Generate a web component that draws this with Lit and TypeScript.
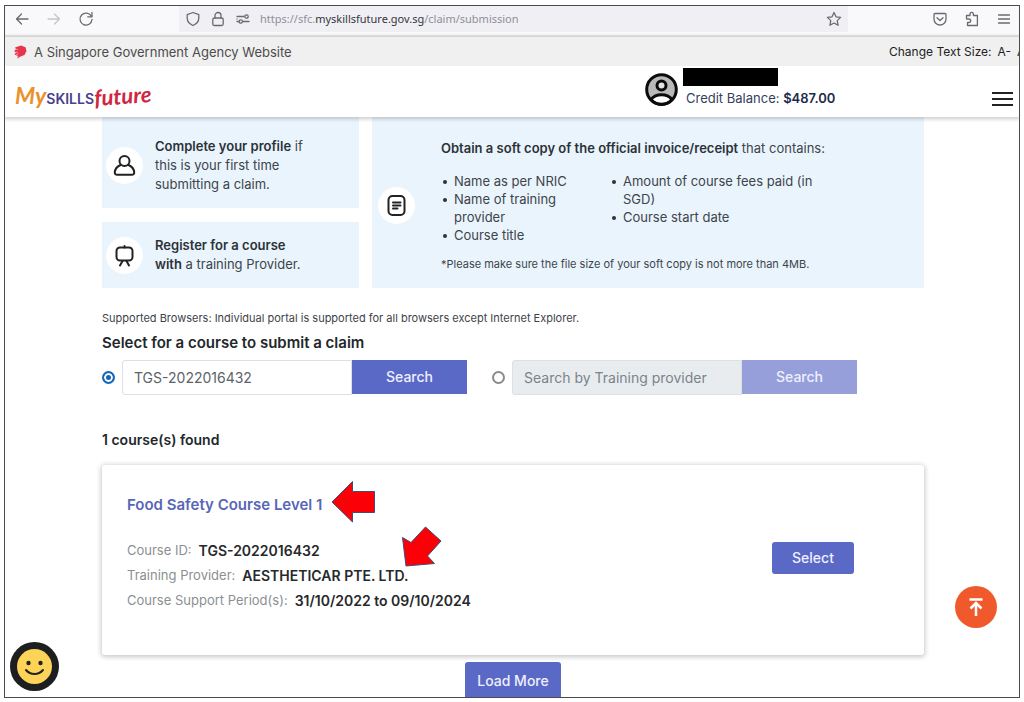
import { LitElement, html, css, svg } from "lit";
import { customElement, property, state } from "lit/decorators.js";

const icons = {
  back: svg`<path d="M14 8H2.500M7.500 3L2.500 8l5 5"/>`,
  forward: svg`<path d="M2 8h11.500M8.500 3l5 5-5 5"/>`,
  reload: svg`<path d="M13.300 5.200A6 6 0 1 0 14 8.500M14 1.500v4.300H9.700"/>`,
  shield: svg`<path d="M8 1.500l5.800 2.200v3.300c0 3.500-2.300 6-5.800 7.500-3.500-1.500-5.800-4-5.800-7.500V3.700z"/>`,
  lock: svg`<rect x="2.800" y="7" width="10.400" height="7.500" rx="1.500"/><path d="M5 7V4.500a3 3 0 0 1 6 0V7"/>`,
  tune: svg`<path d="M2 5.500h7M2 10.500h2M8 10.500h6M2 8h0"/><circle cx="11.500" cy="5.500" r="1.700"/><circle cx="5.800" cy="10.500" r="1.700"/>`,
  star: svg`<path d="M8 1.500l2 4.300 4.600.6-3.400 3.200.9 4.700L8 12l-4.100 2.300.9-4.700L1.400 6.400 6 5.800z"/>`,
  pocket: svg`<path d="M2 3.500c0-.6.400-1 1-1h10c.6 0 1 .4 1 1V8a6 6 0 0 1-12 0zM5 6.800l3 2.700 3-2.700"/>`,
  puzzle: svg`<path d="M6 4.500V3a1.700 1.700 0 0 1 3.400 0v1.500h4v10H3.500v-3H5a1.700 1.700 0 0 0 0-3.500H3.500l-1-.1V4.500z"/>`,
  menu: svg`<path d="M2.500 4h11M2.500 8h11M2.500 12h11"/>`,
};

@customElement("line-icon")
class LineIcon extends LitElement {
  static styles = css`
    :host { display: inline-flex; width: 16px; height: 16px; }
    svg { width: 100%; height: 100%; fill: none; stroke: currentColor; stroke-width: 1.3; stroke-linejoin: round; stroke-linecap: round; }
  `;
  @property() name: keyof typeof icons = "menu";
  render() {
    return html`<svg viewBox="0 0 16 16" aria-hidden="true">${icons[this.name]}</svg>`;
  }
}

@customElement("browser-bar")
class BrowserBar extends LitElement {
  static styles = css`
    :host { display: flex; align-items: center; height: 31px; padding: 0 7px 3px 9px; background: #f9f9fb; border-bottom: 2px solid #e6e6e8; color: #6a6a70; font: 11px/16px "Noto Sans", sans-serif; }
    button { display: flex; border: 0; padding: 0; background: none; color: inherit; }
    button:disabled { color: #c6c6ca; }
    .nav { display: flex; gap: 16px; width: 165px; }
    .address { flex: 1; display: flex; align-items: center; align-self: stretch; gap: 9px; padding: 0 6px; background: #f0f0f4; }
    .url { flex: 1; color: #8f8f96; }
    .url b { font-weight: 400; color: #35353c; }
    .tools { display: flex; gap: 16px; padding-left: 84px; }
  `;
  render() {
    return html`
      <div class="nav">
        <button aria-label="Back"><line-icon name="back"></line-icon></button>
        <button aria-label="Forward" disabled><line-icon name="forward"></line-icon></button>
        <button aria-label="Reload"><line-icon name="reload"></line-icon></button>
      </div>
      <div class="address">
        <line-icon name="shield"></line-icon>
        <line-icon name="lock"></line-icon>
        <line-icon name="tune"></line-icon>
        <span class="url">https://sfc.<b>myskillsfuture.gov.sg</b>/claim/submission</span>
        <button aria-label="Bookmark"><line-icon name="star"></line-icon></button>
      </div>
      <div class="tools">
        <button aria-label="Pocket"><line-icon name="pocket"></line-icon></button>
        <button aria-label="Extensions"><line-icon name="puzzle"></line-icon></button>
        <button aria-label="Application menu"><line-icon name="menu"></line-icon></button>
      </div>
    `;
  }
}

@customElement("site-header")
class SiteHeader extends LitElement {
  static styles = css`
    :host { display: block; position: relative; z-index: 1; background: #fff; box-shadow: 0 1px 4px 1px rgba(0, 0, 0, 0.2); }
    .agency { display: flex; align-items: center; height: 29px; padding-left: 8px; background: #f0f0f0; color: #4c4c4c; font-size: 12px; white-space: nowrap; overflow: hidden; }
    .lion { width: 14px; height: 14px; margin-right: 7px; }
    .agency-name { flex: 1; font-size: 13px; }
    .sizes { display: flex; gap: 6px; width: 130px; color: #222; }
    .sizes button { border: 0; padding: 0; background: none; font: inherit; color: inherit; }
    .brand-row { display: flex; align-items: center; height: 51px; padding: 0 6px 0 10px; }
    .logo { display: flex; align-items: baseline; margin-right: auto; padding-top: 6px; text-decoration: none; font-family: Lato, sans-serif; }
    .my { color: #e9922b; font-size: 23px; font-style: italic; font-weight: 700; }
    .skills { color: #46408f; font-family: Inter, sans-serif; font-size: 14px; font-weight: 600; }
    .future { color: #d0263f; font-size: 22px; font-style: italic; font-weight: 700; transform: rotate(-4deg); }
    .account { display: flex; align-self: flex-start; gap: 5px; width: 347px; padding-top: 2px; }
    .avatar { width: 33px; height: 33px; margin-top: 5px; }
    .details { display: flex; flex-direction: column; gap: 4px; color: #33415c; font-size: 13px; line-height: 16px; }
    .name { width: 95px; height: 18px; background: #000; }
    .balance { padding-left: 3px; }
    .balance b { color: #1d2b4a; font-weight: 600; }
    .menu { display: flex; flex-direction: column; gap: 4px; width: 21px; margin-top: 14px; padding: 0; border: 0; background: none; }
    .menu span { height: 2px; width: 100%; background: #222; }
  `;
  render() {
    return html`
      <div class="agency">
        <svg class="lion" viewBox="0 0 14 14" aria-hidden="true">
          <path d="M2 2.500L8 .5l4.500 1.800L13.500 6l-2 4-4 1.500L4 13.500l1-2.500-3.500-1.500L3 7.500 1 6l2-1.500z" fill="#e5344b"/>
          <path d="M2 4l3 .5M2 7.500l3-.5M3 10l2.500-1.500" stroke="#f6b6bd" stroke-width=".7"/>
        </svg>
        <span class="agency-name">A Singapore Government Agency Website</span>
        <span class="sizes">Change Text Size: <button>A-</button> <button>A</button></span>
      </div>
      <div class="brand-row">
        <a class="logo" href="#" aria-label="MySkillsFuture"><span class="my">My</span><span class="skills">SKILLS</span><span class="future">future</span></a>
        <div class="account">
          <svg class="avatar" viewBox="0 0 33 33" aria-hidden="true">
            <circle cx="16.500" cy="16.500" r="14.800" fill="#b9b9b9"/>
            <path d="M6 26.500c5-6.300 16-6.300 21 0-5 6.500-16 6.500-21 0z" fill="#fff" stroke="#0b0b0b" stroke-width="3"/>
            <circle cx="16.500" cy="12.500" r="4.500" fill="#e4e4e4" stroke="#0b0b0b" stroke-width="3"/>
            <circle cx="16.500" cy="16.500" r="14.800" fill="none" stroke="#0b0b0b" stroke-width="3"/>
          </svg>
          <div class="details">
            <span class="name"></span>
            <span class="balance">Credit Balance: <b>$487.00</b></span>
          </div>
        </div>
        <button class="menu" aria-label="Menu"><span></span><span></span><span></span></button>
      </div>
    `;
  }
}

@customElement("app-root")
class AppRoot extends LitElement {
  static styles = css`
    :host { display: block; box-sizing: border-box; height: 100vh; padding: 5px 4px 4px; background: #fff; font-family: Inter, sans-serif; color: #3d444b; }
    * { box-sizing: border-box; }
    .window { position: relative; height: 100%; overflow: hidden; border: 1px solid #4b4b4f; background: #fff; }
    main { display: flex; flex-direction: column; padding: 0 95px 0 97px; }
    p, h2, h3, ul, dl, dd { margin: 0; }
    b { font-weight: 600; color: #2c3238; }

    .steps { display: grid; grid-template-columns: 257fr 552fr; gap: 14px 13px; font-size: 13px; line-height: 19px; }
    .step { display: flex; align-items: center; gap: 12px; background: #eaf4fc; }
    .profile { padding: 20px 40px 14px 4px; }
    .register { padding: 14px 50px 14px 4px; }
    .invoice { grid-column: 2; grid-row: 1 / 3; gap: 26px; padding: 20px 6px 14px; }
    .badge { flex: none; width: 37px; height: 37px; border-radius: 50%; background: #fff; }
    .badge path, .badge rect, .badge circle { fill: none; stroke: #222; stroke-width: 2; stroke-linecap: round; stroke-linejoin: round; }
    .lists { display: grid; grid-template-columns: 145px 210px; column-gap: 24px; margin: 14px 0 12px; line-height: 18px; }
    .lists ul { padding-left: 13px; }
    .lists li { padding: 0; list-style: none; position: relative; }
    .lists li::before { content: ""; position: absolute; left: -11px; top: 8px; width: 4px; height: 4px; border-radius: 50%; background: #2c3238; }
    .fine { font-size: 11px; line-height: 16px; }

    .browsers { margin-top: 22px; }
    .heading { color: #22272c; font-size: 14px; font-weight: 600; line-height: 18px; }
    .claim { margin-top: 8px; font-size: 15px; }
    .search { display: flex; gap: 25px; margin-top: 8px; }
    .option { display: flex; align-items: center; }
    .radio { appearance: none; width: 13px; height: 13px; margin: 0 7px 0 0; border: 2px solid #8a8a8e; border-radius: 50%; background: #fff; }
    .radio:checked { border-color: #1467b8; background: #1467b8; box-shadow: inset 0 0 0 2px #fff; }
    .field { width: 230px; height: 35px; padding: 0 11px; border: 1px solid #dcdfe3; border-radius: 3px 0 0 3px; background: #fff; color: #5c636a; font: 14px/18px Inter, sans-serif; }
    .field::placeholder { color: #7b838b; opacity: 1; }
    .field:disabled { background: #e9ecef; }
    .button { border: 0; background: #5b69c6; color: #eef0ff; font: 500 14px/18px Inter, sans-serif; }
    .go { align-self: flex-start; width: 115px; height: 34px; }
    .go:disabled { background: #969fda; }
    .found { margin-top: 36px; }

    .card { position: relative; display: flex; justify-content: space-between; align-items: center; height: 190px; margin-top: 16px; padding: 0 70px 0 25px; border-radius: 3px; background: #fff; box-shadow: 0 1px 5px 1px rgba(0, 0, 0, 0.22); }
    .course { display: block; color: #5866b8; font-size: 15px; font-weight: 600; line-height: 18px; text-decoration: none; }
    .facts { margin: 24px 0 12px; font-size: 14px; line-height: 25px; }
    .fact { display: flex; gap: 7px; }
    .fact dt { color: #8b8f93; font-size: 13px; }
    .fact dd { color: #26292c; font-weight: 600; }
    .select { width: 82px; height: 32px; margin-bottom: 4px; border-radius: 3px; }
    .more { align-self: center; width: 96px; height: 38px; margin-top: 7px; border-radius: 3px; }
    .arrows { position: absolute; left: 229px; top: 14px; width: 112px; height: 90px; pointer-events: none; }
    .arrows path { fill: #fb0007; stroke: #3c4f77; stroke-width: 1; }
    .float { position: absolute; padding: 0; border: 0; background: none; }
    .float svg { display: block; width: 100%; height: 100%; }
    .top { right: 22px; bottom: 69px; width: 42px; height: 42px; }
    .chat { left: 5px; bottom: 6px; width: 49px; height: 49px; }
  `;

  @state() private mode: "course" | "provider" = "course";

  private renderOption(mode: "course" | "provider", label: string, value: string) {
    const active = this.mode === mode;
    return html`
      <div class="option">
        <input class="radio" type="radio" name="mode" aria-label=${label} .checked=${active} @change=${() => (this.mode = mode)} />
        <input class="field" type="text" aria-label=${label} placeholder=${label} .value=${value} ?disabled=${!active} />
        <button class="button go" ?disabled=${!active}>Search</button>
      </div>
    `;
  }

  render() {
    return html`
      <div class="window">
        <browser-bar></browser-bar>
        <site-header></site-header>
        <main>
          <section class="steps">
            <div class="step profile">
              <svg class="badge" viewBox="0 0 37 37" aria-hidden="true">
                <circle cx="18.500" cy="14" r="5"/>
                <path d="M14.500 18c-3.500 1.600-5.500 4-5.700 7.200-.1 1.700.7 2.600 2.400 2.600h14.600c1.700 0 2.500-.9 2.400-2.600-.2-3.200-2.200-5.600-5.700-7.200"/>
              </svg>
              <p><b>Complete your profile</b> if this is your first time submitting a claim.</p>
            </div>
            <div class="step register">
              <svg class="badge" viewBox="0 0 37 37" aria-hidden="true">
                <rect x="10.500" y="10.500" width="16" height="13" rx="3.500"/>
                <path d="M18.500 9v1.500M16.500 24L14 28.500M20.500 24l2.500 4.500"/>
              </svg>
              <p><b>Register for a course with</b> a training Provider.</p>
            </div>
            <div class="step invoice">
              <svg class="badge" viewBox="0 0 37 37" aria-hidden="true">
                <rect x="10.500" y="9" width="16" height="19" rx="4"/>
                <path d="M15 15.500h7.500M15 18.500h7.500M15 21.500h4.500"/>
              </svg>
              <div>
                <p><b>Obtain a soft copy of the official invoice/receipt</b> that contains:</p>
                <div class="lists">
                  <ul>
                    <li>Name as per NRIC</li>
                    <li>Name of training provider</li>
                    <li>Course title</li>
                  </ul>
                  <ul>
                    <li>Amount of course fees paid (in SGD)</li>
                    <li>Course start date</li>
                  </ul>
                </div>
                <p class="fine">*Please make sure the file size of your soft copy is not more than 4MB.</p>
              </div>
            </div>
          </section>

          <p class="fine browsers">Supported Browsers: Individual portal is supported for all browsers except Internet Explorer.</p>
          <h2 class="heading claim">Select for a course to submit a claim</h2>
          <div class="search">
            ${this.renderOption("course", "Search by Course ID", "TGS-2022016432")}
            ${this.renderOption("provider", "Search by Training provider", "")}
          </div>
          <h2 class="heading found">1 course(s) found</h2>

          <article class="card">
            <div>
              <a class="course" href="#">Food Safety Course Level 1</a>
              <dl class="facts">
                <div class="fact"><dt>Course ID:</dt><dd>TGS-2022016432</dd></div>
                <div class="fact"><dt>Training Provider:</dt><dd>AESTHETICAR PTE. LTD.</dd></div>
                <div class="fact"><dt>Course Support Period(s):</dt><dd>31/10/2022 to 09/10/2024</dd></div>
              </dl>
            </div>
            <button class="button select">Select</button>
            <svg class="arrows" viewBox="0 0 112 90" aria-hidden="true">
              <path d="M1 23L21.500 2.500v10h22v21h-22v9.500z"/>
              <path d="M71.500 58.500l8.500 5L94.500 48l15.500 14-13.500 15 7 7.500-28.500 2.500z"/>
            </svg>
          </article>
          <button class="button more">Load More</button>
        </main>

        <button class="float top" aria-label="Back to top">
          <svg viewBox="0 0 42 42">
            <circle cx="21" cy="21" r="21" fill="#f0592b"/>
            <path d="M14.500 13.500h13M21 30V17.500M15.500 22.500l5.500-5.500 5.500 5.500" fill="none" stroke="#fff" stroke-width="2.500"/>
          </svg>
        </button>
        <button class="float chat" aria-label="Open chat">
          <svg viewBox="0 0 49 49">
            <circle cx="24.500" cy="24.500" r="24.500" fill="#1d1e20"/>
            <circle cx="24.500" cy="24.500" r="17.500" fill="#fdd458"/>
            <circle cx="18.500" cy="21" r="2.200" fill="#222"/>
            <circle cx="30.500" cy="21" r="2.200" fill="#222"/>
            <path d="M16 28c4.500 5.300 12.500 5.300 17 0" fill="none" stroke="#222" stroke-width="2" stroke-linecap="round"/>
          </svg>
        </button>
      </div>
    `;
  }
}
